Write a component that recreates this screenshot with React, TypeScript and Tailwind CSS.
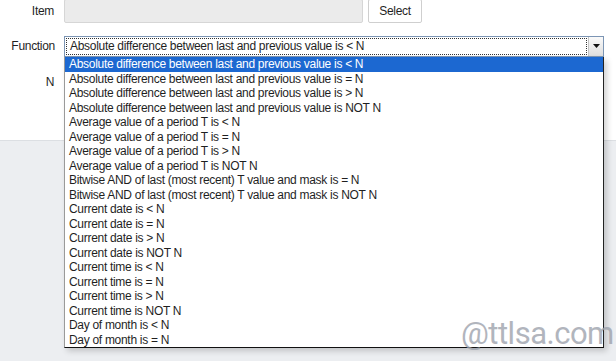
const options = [
  'Absolute difference between last and previous value is < N',
  'Absolute difference between last and previous value is = N',
  'Absolute difference between last and previous value is > N',
  'Absolute difference between last and previous value is NOT N',
  'Average value of a period T is < N',
  'Average value of a period T is = N',
  'Average value of a period T is > N',
  'Average value of a period T is NOT N',
  'Bitwise AND of last (most recent) T value and mask is = N',
  'Bitwise AND of last (most recent) T value and mask is NOT N',
  'Current date is < N',
  'Current date is = N',
  'Current date is > N',
  'Current date is NOT N',
  'Current time is < N',
  'Current time is = N',
  'Current time is > N',
  'Current time is NOT N',
  'Day of month is < N',
  'Day of month is = N',
];

export default function App() {
  return (
    <div
      className="relative w-[616px] h-[361px] overflow-hidden bg-[#eceef1] text-[12px] tracking-[-0.3px] text-[#1f1f1f]"
      style={{ fontFamily: '"Liberation Sans", Arial, sans-serif' }}
    >
      {/* form panel */}
      <div className="h-[142px] bg-white border-b border-[#dcdfe3]">
        <div className="flex items-center h-[24px] -mt-[1px]">
          <div className="w-[55px] text-right pr-[1px]">Item</div>
          <div className="ml-[9px] w-[299px] h-[24px] bg-[#ebebeb] border border-[#d6d6d6] rounded-[2px]" />
          <button className="ml-[5px] w-[54px] h-[24px] bg-white border border-[#cfcfcf] rounded-[2px] text-[12px]">
            Select
          </button>
        </div>
        <div className="flex items-center h-[22px] mt-[12px]">
          <div className="w-[55px] text-right">Function</div>
          <div className="ml-[9px] w-[540px] h-[21px] flex border border-[#7c95b4] bg-white">
            <div className="flex-1 m-[1px] border border-dotted border-[#333] flex items-center pl-[3px]">
              Absolute difference between last and previous value is &lt; N
            </div>
            <div className="w-[15px] flex items-center justify-center bg-gradient-to-b from-[#fafafa] to-[#dedede] border-l border-[#c4c4c4]">
              <svg width="7" height="4" viewBox="0 0 7 4">
                <path d="M0 0h7L3.5 4z" fill="#111" />
              </svg>
            </div>
          </div>
        </div>
        <div className="flex h-[14px] mt-[16px]">
          <div className="w-[54px] text-right">N</div>
        </div>
      </div>

      {/* open dropdown list */}
      <div className="absolute left-[64px] top-[57px] w-[540px] bg-white border-l border-[#9a9a9a] border-r border-b border-r-[#222] border-b-[#111] shadow-[3px_3px_6px_rgba(0,0,0,0.18)]">
        {options.map((o, i) => (
          <div
            key={o}
            className={
              'h-[14.5px] leading-[14.5px] pl-[4px] whitespace-nowrap ' +
              (i === 0 ? 'bg-[#1c68d1] text-white' : '')
            }
          >
            {o}
          </div>
        ))}
      </div>

      <div
        className="absolute left-[461px] top-[318px] text-[31px] leading-none text-[#9ea3ad] opacity-80 tracking-[-0.5px]"
        style={{ fontFamily: 'Roboto, "Liberation Sans", sans-serif' }}
      >
        @ttlsa.com
      </div>
    </div>
  );
}
